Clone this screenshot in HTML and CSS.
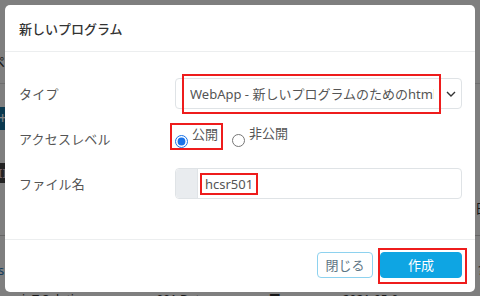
FILE: index.html
```html
<!DOCTYPE html>
<html>
<head lang="ja">
    <meta charset="UTF-8">
    <title>新しいプログラム</title>
    <link rel="stylesheet" href="styles.css">
</head>
<body>
<div class="page">
    <div class="page-head">ペ</div>
    <div class="page-line"></div>
    <div class="page-add">+</div>
    <div class="page-dark">II</div>
    <div class="page-row page-row-right"><span>日</span></div>
    <div class="page-line2"></div>
    <div class="page-row"><span class="link">s</span><span class="right-q">?</span></div>
    <div class="page-bottom">
        <span>ioT Solutions</span>
        <span>001 Data</span>
        <span>■</span>
        <span>2021-05-0</span>
    </div>
</div>

<div class="backdrop">
    <div class="modal">
        <div class="modal-header">
            <h5 class="modal-title">新しいプログラム</h5>
        </div>
        <div class="modal-body">
            <div class="form-label">タイプ</div>
            <div class="select">
                <span class="select-text">WebApp - 新しいプログラムのためのhtml テンプレート</span>
                <svg class="chevron" width="10" height="6" viewBox="0 0 10 6">
                    <path d="M1 1l4 4 4-4" fill="none" stroke="#333" stroke-width="1.4"/>
                </svg>
                <div class="anno anno-select"></div>
            </div>

            <div class="form-label">アクセスレベル</div>
            <div class="radios">
                <label class="radio-item anno-radio">
                    <input type="radio" name="access" checked>
                    <span>公開</span>
                </label>
                <label class="radio-item">
                    <input type="radio" name="access">
                    <span>非公開</span>
                </label>
            </div>

            <div class="form-label">ファイル名</div>
            <div class="input-group">
                <span class="addon"></span>
                <span class="input-text"><span class="anno-text">hcsr501</span></span>
            </div>
        </div>
        <div class="modal-footer">
            <a class="btn btn-close">閉じる</a>
            <span class="btn-wrap">
                <a class="btn btn-create">作成</a>
                <span class="anno anno-btn"></span>
            </span>
        </div>
    </div>
</div>
</body>
</html>
```

FILE: styles.css
```css
* {
    margin: 0;
    padding: 0;
    box-sizing: border-box;
}

html, body {
    width: 480px;
    height: 296px;
    overflow: hidden;
}

body {
    font-family: "Noto Sans", "Noto Sans CJK JP", sans-serif;
    font-size: 13px;
    color: #555;
    background: #fff;
}

/* page behind the dialog */
.page {
    height: 296px;
    overflow: hidden;
    padding-top: 52px;
    color: #333;
}

.page-head {
    height: 20px;
    margin-left: -9px;
    font-size: 14px;
    line-height: 20px;
    margin-bottom: 11px;
}

.page-line {
    height: 1px;
    background: #ddd;
    margin-bottom: 23px;
}

.page-add {
    width: 26px;
    height: 23px;
    margin-left: -21px;
    padding-left: 19px;
    background: #17739e;
    color: #fff;
    font-size: 16px;
    line-height: 22px;
    margin-bottom: 33px;
}

.page-dark {
    width: 26px;
    height: 20px;
    margin-left: -21px;
    padding-left: 19px;
    background: #444;
    color: #e8c8d0;
    line-height: 20px;
    margin-bottom: 15px;
}

.page-row {
    display: flex;
    justify-content: space-between;
    height: 20px;
    line-height: 20px;
}

.page-row-right {
    justify-content: flex-end;
    margin-right: -8px;
    margin-bottom: 17px;
}

.page-line2 {
    height: 1px;
    background: #ccc;
    margin-bottom: 24px;
}

.link {
    margin-left: -2px;
    color: #2a7ab8;
}

.right-q {
    margin-right: -4px;
}

.page-bottom {
    display: flex;
    gap: 62px;
    margin-top: 12px;
    padding-left: 22px;
    font-size: 12px;
    line-height: 16px;
}

/* dialog */
.backdrop {
    position: fixed;
    top: 0;
    left: 0;
    right: 0;
    bottom: 0;
    padding: 5px;
    background: rgba(0, 0, 0, .5);
}

.modal {
    display: flex;
    flex-direction: column;
    width: 470px;
    height: 287px;
    background: #fff;
    border-radius: 5px;
}

.modal-header {
    display: flex;
    align-items: center;
    height: 47px;
    padding: 0 14px;
    border-bottom: 1px solid #eceeef;
}

.modal-title {
    font-size: 13px;
    font-weight: 500;
    color: #333;
}

.modal-body {
    display: grid;
    grid-template-columns: 156px minmax(0, 1fr);
    grid-auto-rows: 31px;
    row-gap: 14px;
    padding: 26px 13px 40px 14px;
}

.form-label {
    display: flex;
    align-items: center;
    color: #555;
    letter-spacing: .2px;
}

.select {
    position: relative;
    display: flex;
    align-items: center;
    min-width: 0;
    border: 1px solid #dfe3e6;
    border-radius: 4px;
    padding: 0 27px 0 14px;
}

.select-text {
    white-space: nowrap;
    overflow: hidden;
    color: #555;
    font-size: 13px;
}

.chevron {
    position: absolute;
    right: 5px;
    top: 12px;
}

.anno {
    position: absolute;
    border: 2px solid #ee1c1c;
}

.anno-select {
    left: 6px;
    top: -5px;
    width: 259px;
    height: 40px;
}

.radios {
    display: flex;
    align-items: flex-start;
}

.radio-item {
    display: flex;
    align-items: flex-start;
    height: 27px;
    padding-top: 1px;
    color: #555;
}

.radio-item input {
    width: 13px;
    height: 13px;
    margin: 10px 4px 0 0;
    accent-color: #1a73e8;
}

.radio-item span {
    line-height: 18px;
}

.anno-radio {
    margin-left: -5px;
    margin-right: 9px;
    padding: 0 3px;
    border: 2px solid #ee1c1c;
}

.input-group {
    display: flex;
    min-width: 0;
    border: 1px solid #dfe3e6;
    border-radius: 4px;
}

.addon {
    width: 22px;
    background: #e9ecef;
    border-right: 1px solid #dfe3e6;
    border-radius: 4px 0 0 4px;
}

.input-text {
    display: flex;
    align-items: center;
    padding-left: 2px;
}

.anno-text {
    height: 22px;
    line-height: 18px;
    padding: 0 3px;
    border: 2px solid #ee1c1c;
    color: #555;
}

.modal-footer {
    display: flex;
    justify-content: flex-end;
    align-items: flex-start;
    gap: 7px;
    padding: 12px 13px 0 0;
    border-top: 1px solid #eceeef;
    flex: 1;
}

.btn {
    display: inline-block;
    height: 26px;
    line-height: 24px;
    text-align: center;
    border-radius: 4px;
    font-size: 13px;
}

.btn-close {
    width: 56px;
    border: 1px solid #8ed2ef;
    color: #5d7584;
}

.btn-wrap {
    position: relative;
}

.btn-create {
    width: 82px;
    background: #0ea5e3;
    border: 1px solid #0ea5e3;
    color: #fff;
}

.anno-btn {
    left: -2px;
    top: -4px;
    right: -5px;
    bottom: -6px;
}
```
